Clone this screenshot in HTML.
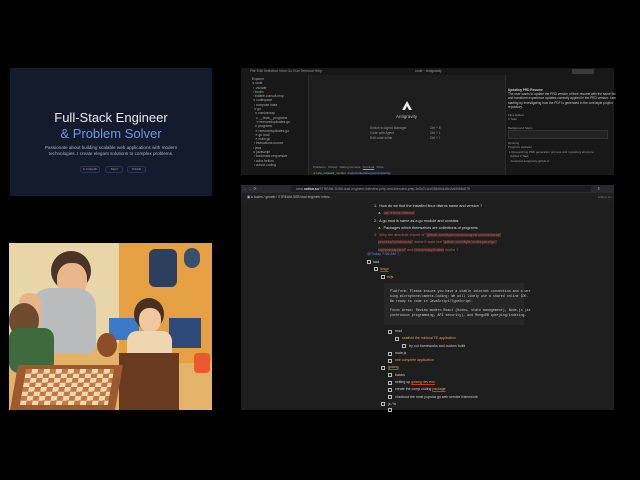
<!DOCTYPE html>
<html><head><meta charset="utf-8"><style>
*{margin:0;padding:0;box-sizing:border-box}
body{width:640px;height:480px;background:#000;position:relative;overflow:hidden;font-family:"Liberation Sans",sans-serif}
.a{position:absolute}
.t{position:absolute;white-space:nowrap}
.cb{position:absolute;width:4px;height:4px;border:1px solid #bbb}
</style></head><body>

<!-- top-left card -->
<div class="a" style="left:10px;top:68px;width:202px;height:128px;background:#141b2d"></div>
<div class="t" style="left:10px;width:202px;text-align:center;top:110px;font-size:13px;color:#e8ecf3">Full-Stack Engineer</div>
<div class="t" style="left:10px;width:202px;text-align:center;top:126px;font-size:13px;color:#6f98e0">&amp; Problem Solver</div>
<div class="t" style="left:10px;width:202px;text-align:center;top:145px;font-size:4.6px;line-height:6px;color:#aab3c3">Passionate about building scalable web applications with modern<br>technologies. I create elegant solutions to complex problems.</div>
<div class="a" style="left:80px;top:166px;width:20px;height:7px;border:1px solid #2d3650;border-radius:3px;font-size:3px;color:#aaa;text-align:center;line-height:5px">in LinkedIn</div>
<div class="a" style="left:105px;top:166px;width:18px;height:7px;border:1px solid #2d3650;border-radius:3px;font-size:3px;color:#aaa;text-align:center;line-height:5px">Topcl</div>
<div class="a" style="left:127px;top:166px;width:19px;height:7px;border:1px solid #2d3650;border-radius:3px;font-size:3px;color:#aaa;text-align:center;line-height:5px">GitHub</div>

<!-- illustration -->
<div class="a" style="left:9px;top:243px;width:203px;height:167px;background:#e3b36a;overflow:hidden">
 <div class="a" style="left:0;top:0;width:110px;height:100px;background:#e9d6a8"></div>
 <div class="a" style="left:110px;top:0;width:93px;height:120px;background:#e4a042"></div>
 <div class="a" style="left:140px;top:6px;width:28px;height:38px;background:#2c3f5e;border-radius:6px"></div>
 <div class="a" style="left:175px;top:5px;width:16px;height:20px;background:#38506e;border-radius:8px"></div>
 <div class="a" style="left:42px;top:8px;width:40px;height:40px;background:#4a3425;border-radius:50%"></div>
 <div class="a" style="left:48px;top:20px;width:30px;height:34px;background:#e9b58a;border-radius:45%"></div>
 <div class="a" style="left:22px;top:45px;width:65px;height:65px;background:#b8bcbc;border-radius:30% 30% 10% 10%"></div>
 <div class="a" style="left:10px;top:50px;width:22px;height:60px;background:#e8b489;border-radius:10px"></div>
 <div class="a" style="left:0;top:60px;width:30px;height:35px;background:#6e4a2e;border-radius:50%"></div>
 <div class="a" style="left:0;top:85px;width:45px;height:45px;background:#3e6a3e;border-radius:10px"></div>
 <div class="a" style="left:100px;top:75px;width:30px;height:22px;background:#3c79c9"></div>
 <div class="a" style="left:160px;top:75px;width:32px;height:30px;background:#2e4a7a"></div>
 <div class="a" style="left:125px;top:55px;width:30px;height:32px;background:#4a3020;border-radius:50%"></div>
 <div class="a" style="left:130px;top:65px;width:22px;height:24px;background:#f0c8a0;border-radius:45%"></div>
 <div class="a" style="left:118px;top:88px;width:45px;height:60px;background:#efd6b0;border-radius:10px"></div>
 <div class="a" style="left:88px;top:90px;width:20px;height:24px;background:#8a4f25;border-radius:50%"></div>
 <div class="a" style="left:110px;top:110px;width:60px;height:57px;background:#6a3a20"></div>
 <div class="a" style="left:5px;top:122px;width:105px;height:45px;background:#9c5a2e;transform:skewX(-10deg)"></div>
 <div class="a" style="left:14px;top:126px;width:88px;height:36px;background:repeating-conic-gradient(#f1d8b0 0 25%,#c07a45 0 50%) 0 0/12px 9px;transform:skewX(-10deg)"></div>
 <div class="a" style="left:185px;top:110px;width:16px;height:20px;background:#e85a30;border-radius:4px"></div>
</div>

<!-- VS Code panel -->
<div class="a" style="left:241px;top:68px;width:373px;height:107px;background:#1e1e1e"></div>
<div class="a" style="left:241px;top:68px;width:373px;height:7px;background:#181818"></div>
<div class="t" style="left:250px;top:69px;font-size:3.5px;color:#999">File Edit Selection View Go Run Terminal Help</div>
<div class="t" style="left:415px;top:69px;font-size:3.5px;color:#999">code · antigravity</div>
<div class="a" style="left:572px;top:69px;width:22px;height:5px;background:#3a3a3a;border-radius:1px"></div>
<div class="a" style="left:241px;top:75px;width:8px;height:100px;background:#181818"></div>
<div class="a" style="left:249px;top:75px;width:60px;height:100px;background:#181818;border-right:1px solid #2a2a2a"></div>
<div class="t" style="left:252px;top:77px;font-size:3.3px;line-height:4.3px;color:#a8a8a8">Explorer<br>∨ code<br>&nbsp;› .vscode<br>&nbsp;› <span style="color:#7ec17e">books</span><br>&nbsp;› bubble-consult-mvp<br>&nbsp;∨ codespace<br>&nbsp;&nbsp;› compose.base<br>&nbsp;&nbsp;∨ go<br>&nbsp;&nbsp;&nbsp;∨ comicscrap<br>&nbsp;&nbsp;&nbsp;&nbsp;∨ __tests__programs<br>&nbsp;&nbsp;&nbsp;&nbsp;&nbsp;≡ removeduplicates.go<br>&nbsp;&nbsp;&nbsp;∨ programs<br>&nbsp;&nbsp;&nbsp;&nbsp;≡ removeduplicates.go<br>&nbsp;&nbsp;&nbsp;&nbsp;≡ go.mod<br>&nbsp;&nbsp;&nbsp;&nbsp;≡ main.go<br>&nbsp;&nbsp;› instructions.source<br>&nbsp;› java<br>&nbsp;∨ javascript<br>&nbsp;&nbsp;› bookmark-responsive<br>&nbsp;&nbsp;› color-hellion<br>&nbsp;&nbsp;› cursor-coding</div>
<svg class="a" style="left:401px;top:100px" width="12" height="10" viewBox="0 0 12 10"><path d="M1 10 L6 1 L11 10 L8 10 L6 6 L4 10Z" fill="#eee"/></svg>
<div class="t" style="left:396px;top:114px;font-size:4.5px;color:#bbb">Antigravity</div>
<div class="t" style="left:370px;top:126px;font-size:3.3px;line-height:5px;color:#999">Switch to Agent Manager<br>Code with Agent<br>Edit code inline</div>
<div class="t" style="left:430px;top:126px;font-size:3.3px;line-height:5px;color:#999">Ctrl + E<br>Ctrl + L<br>Ctrl + I</div>
<div class="t" style="left:313px;top:165px;font-size:3px;color:#999">Problems &nbsp; Output &nbsp; Debug Console &nbsp; <u>Terminal</u> &nbsp; Ports</div>
<div class="t" style="left:313px;top:171px;font-size:3px;color:#7ec17e">➜ kyle_rebased_monitor &nbsp;<span style="color:#7aa7e6">/code/codespace/go/comicscrap</span></div>
<div class="a" style="left:505px;top:75px;width:109px;height:100px;background:#181818;border-left:1px solid #2a2a2a"></div>
<div class="t" style="left:508px;top:88px;font-size:3.2px;line-height:4.2px;color:#c8c8c8"><b>Updating PRD Resume</b><br>The user wants to update the PRD version of their resume with the same list<br>and transform experience updates correctly applied in the PRD version. I am<br>starting by investigating how the PDF is generated in the core/style project<br>repository.</div>
<div class="t" style="left:508px;top:113px;font-size:3px;line-height:4.2px;color:#999">Files Edited<br>≡ Task<br><br>Background Steps</div>
<div class="a" style="left:508px;top:130px;width:100px;height:9px;background:#222;border:1px solid #333"></div>
<div class="t" style="left:508px;top:136px;font-size:3px;line-height:4.6px;color:#999"><br>Running<br>Progress Updates<br>&nbsp;1 Researching PDF generation process and repository structure<br>&nbsp;&nbsp;&nbsp;Edited ≡ Task<br>&nbsp;&nbsp;&nbsp;Analyzed antigravity.github.io</div>

<!-- Browser panel -->
<div class="a" style="left:241px;top:185px;width:373px;height:225px;background:#1e1e1e"></div>
<div class="a" style="left:241px;top:185px;width:373px;height:8px;background:#2a2a2e"></div>
<div class="a" style="left:291px;top:186px;width:300px;height:6px;background:#1c1b22;border-radius:2px"></div>
<div class="t" style="left:243px;top:186px;font-size:4px;color:#aaa">← → ⟳</div>
<div class="t" style="left:296px;top:187px;font-size:3.3px;color:#999">www.<b style="color:#ddd">notion.so</b>/STREAM-3GB8-lead-engineer-interview-prep-and-interview-prep-3e5d7c1cd788d9d1a5e2c5d9b6d276</div>
<div class="t" style="left:597px;top:186px;font-size:4px;color:#ccc">⇧</div>
<div class="a" style="left:241px;top:193px;width:373px;height:8px;background:#202020"></div>
<div class="t" style="left:247px;top:195px;font-size:3.3px;color:#bbb">▣ <span style="color:#5a8fd8">■</span> kodes / growth / STREAM-3GB lead engineer interv...</div>
<div class="t" style="left:598px;top:195px;font-size:3px;color:#777">Edited 1m</div>
<div class="t" style="left:374px;top:203px;font-size:3.8px;line-height:7.3px;color:#ddd">
1.&nbsp; How do we find the installed linux distros name and version ?<br>
&nbsp;&nbsp;&nbsp;&nbsp;a.&nbsp; <span style="color:#d05a5a;background:#3a2a2a">cat /etc/os-release</span><br>
2.&nbsp; A go.mod is same as a go module and consists<br>
&nbsp;&nbsp;&nbsp;&nbsp;a.&nbsp; Packages which themselves are collections of programs<br>
<span style="color:#d05a5a">3.&nbsp; Why the absolute import of <span style="background:#3a2a2a">"github.com/kyle/comicscrap/src/comicscrap"</span></span><br>
<span style="color:#d05a5a">&nbsp;&nbsp;&nbsp;&nbsp;<span style="background:#3a2a2a">process/comicscrap"</span> doesn't work but <span style="background:#3a2a2a">"github.com/kyle/codespace/go"</span></span><br>
<span style="color:#d05a5a">&nbsp;&nbsp;&nbsp;&nbsp;<span style="background:#3a2a2a">comicscrap/src/"</span> and <span style="background:#3a2a2a">removeduplicates</span> works ?</span></div>
<div class="t" style="left:367px;top:252px;font-size:3.8px;color:#5a8fd8">@Today 7:56 AM ⓘ</div>
<div class="t" style="left:367px;top:259px;font-size:3.5px;line-height:7.3px;color:#ccc">
<span style="margin-left:6px">task</span><br>
<span style="margin-left:13px;color:#e0a060;text-decoration:underline #c33">lango</span><br>
<span style="margin-left:20px;color:#e0a060">ts/js</span></div>
<div class="cb" style="left:367px;top:260px"></div>
<div class="cb" style="left:374px;top:267px"></div>
<div class="cb" style="left:381px;top:275px"></div>
<div class="a" style="left:384px;top:283px;width:140px;height:42px;background:#262626"></div>
<div class="t" style="left:390px;top:289px;font-family:'Liberation Mono',monospace;font-size:3.3px;line-height:4.8px;color:#ccc">Platform: Please ensure you have a stable internet connection and a wor<br>king microphone/camera.Coding: We will likely use a shared online IDE.<br>Be ready to code in JavaScript/TypeScript.<br><br>Focus Areas: Review modern React (Hooks, state management), Node.js (as<br>ynchronous programming, API security), and MongoDB querying/indexing.</div>
<div class="t" style="left:395px;top:328px;font-size:3.5px;line-height:7.3px;color:#ccc">
read<br>
<span style="margin-left:7px;color:#e0a060">scaffold the minimal FE application</span><br>
<span style="margin-left:14px">try out frameworks and custom build</span><br>
node.js<br>
<span style="color:#e0a060">one complete application</span><br>
<span style="margin-left:-7px;color:#e0a060;text-decoration:underline #c33">golang</span><br>
basics<br>
setting up <span style="color:#e0a060;text-decoration:underline #c33">golang dev env</span><br>
create the comp coding <span style="color:#e0a060;text-decoration:underline #c33">package</span><br>
checkout the most popular go web service framework<br>
<span style="margin-left:-7px">js / ts</span></div>
<div class="cb" style="left:388px;top:330px"></div>
<div class="cb" style="left:395px;top:337px"></div>
<div class="cb" style="left:402px;top:344px"></div>
<div class="cb" style="left:388px;top:352px"></div>
<div class="cb" style="left:388px;top:359px"></div>
<div class="cb" style="left:381px;top:366px"></div>
<div class="cb" style="left:388px;top:373px"></div>
<div class="cb" style="left:388px;top:381px"></div>
<div class="cb" style="left:388px;top:388px"></div>
<div class="cb" style="left:388px;top:395px"></div>
<div class="cb" style="left:381px;top:402px"></div>
<div class="cb" style="left:388px;top:408px"></div>
</body></html>
